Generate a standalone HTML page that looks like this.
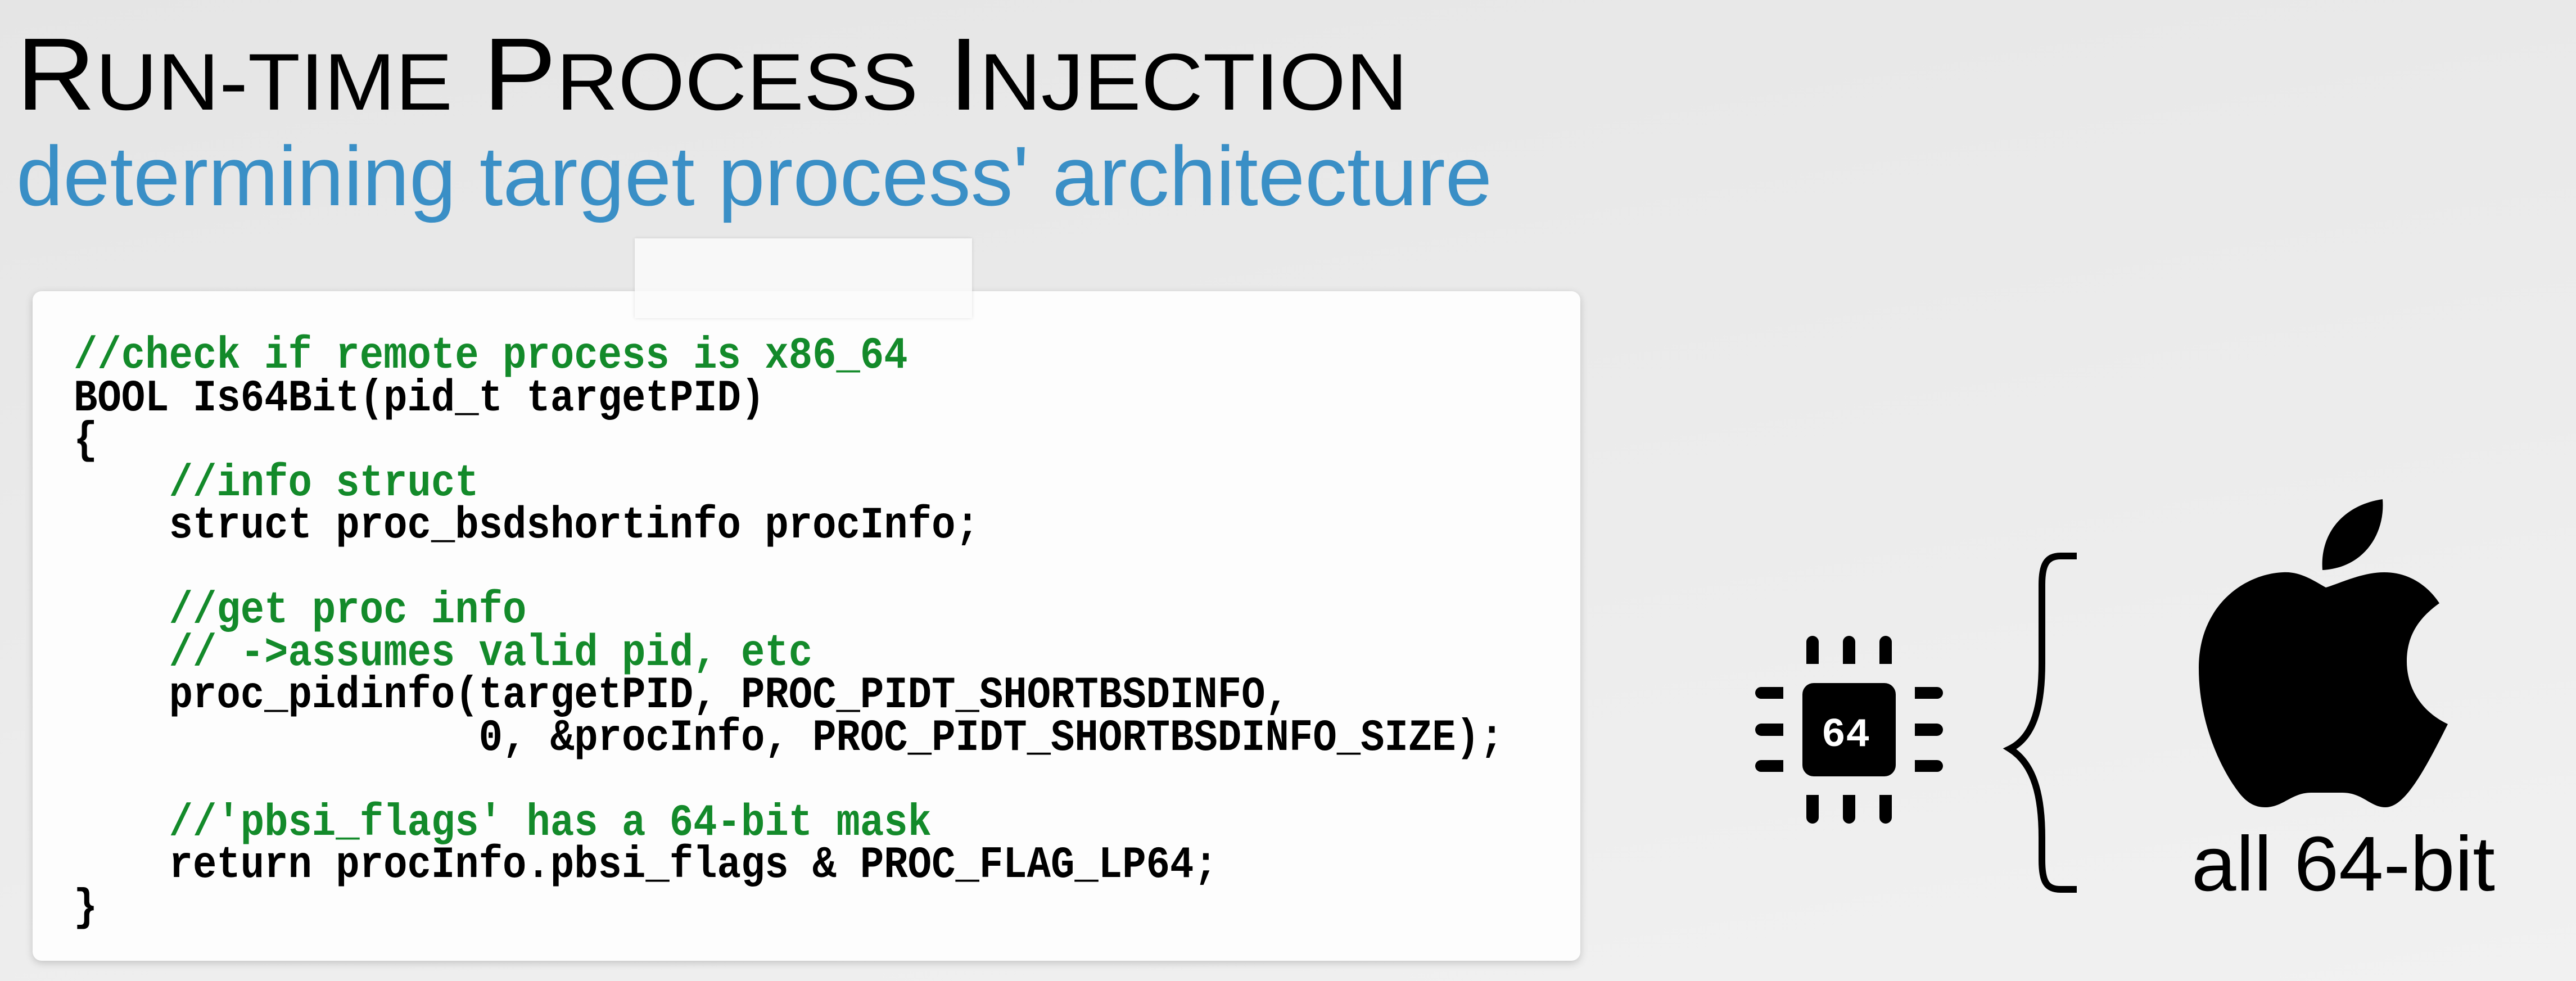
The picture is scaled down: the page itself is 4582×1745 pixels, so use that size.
<!DOCTYPE html>
<html><head><meta charset="utf-8"><style>
html,body{margin:0;padding:0}
body{width:4582px;height:1745px;position:relative;overflow:hidden;
background:linear-gradient(170deg,#e5e5e5 0%,#eaeaea 40%,#f1f1f1 100%);font-family:"Liberation Sans",sans-serif}
#title{position:absolute;left:29px;top:40px;font-size:183px;line-height:183px;color:#000;white-space:nowrap;transform-origin:0 0;font-family:"Liberation Sans Narrow","Liberation Sans",sans-serif}
#title .s{font-size:143px}
#sub{position:absolute;left:29px;top:228px;font-size:150px;line-height:170px;color:#3a8fc6;white-space:nowrap;transform-origin:0 0;font-family:"Liberation Sans Narrow","Liberation Sans",sans-serif}
#box{position:absolute;left:58px;top:518px;width:2753px;height:1191px;background:#fdfdfd;border-radius:16px;box-shadow:0 4px 14px rgba(0,0,0,.18)}
#tape{position:absolute;left:1129px;top:424px;width:600px;height:142px;background:rgba(250,250,250,.85);box-shadow:0 0 6px rgba(0,0,0,.12)}
#code{position:absolute;left:131px;top:596px;font-family:"Liberation Mono",monospace;font-weight:bold;font-size:80px;line-height:75.5px;white-space:pre;color:#000;transform:scaleX(0.883);transform-origin:0 0}
.g{color:#138a2a}
#all{position:absolute;left:3898px;top:1462px;font-size:138px;line-height:150px;color:#000;white-space:nowrap}
</style></head><body>
<div id="title">R<span class="s">UN-TIME</span> P<span class="s">ROCESS</span> I<span class="s">NJECTION</span></div>
<div id="sub">determining target process' architecture</div>
<div id="box"></div>
<div id="tape"></div>
<div id="code"><span class="g">//check if remote process is x86_64</span>
BOOL Is64Bit(pid_t targetPID)
{
    <span class="g">//info struct</span>
    struct proc_bsdshortinfo procInfo;

    <span class="g">//get proc info</span>
    <span class="g">// -&gt;assumes valid pid, etc</span>
    proc_pidinfo(targetPID, PROC_PIDT_SHORTBSDINFO,
                 0, &amp;procInfo, PROC_PIDT_SHORTBSDINFO_SIZE);

    <span class="g">//'pbsi_flags' has a 64-bit mask</span>
    return procInfo.pbsi_flags &amp; PROC_FLAG_LP64;
}</div>
<svg style="position:absolute;left:0;top:0" width="4582" height="1745">
<rect x="3206" y="1215" width="166" height="166" rx="20" fill="#000"/>
<g fill="#000">
<rect x="3213" y="1131" width="22" height="50" rx="11"/><rect x="3213" y="1150" width="22" height="31"/>
<rect x="3278" y="1131" width="22" height="50" rx="11"/><rect x="3278" y="1150" width="22" height="31"/>
<rect x="3343" y="1131" width="22" height="50" rx="11"/><rect x="3343" y="1150" width="22" height="31"/>
<rect x="3213" y="1414" width="22" height="51" rx="11"/><rect x="3213" y="1414" width="22" height="30"/>
<rect x="3278" y="1414" width="22" height="51" rx="11"/><rect x="3278" y="1414" width="22" height="30"/>
<rect x="3343" y="1414" width="22" height="51" rx="11"/><rect x="3343" y="1414" width="22" height="30"/>
<rect x="3122" y="1222" width="50" height="21" rx="10.5"/><rect x="3140" y="1222" width="32" height="21"/>
<rect x="3122" y="1287" width="50" height="22" rx="11"/><rect x="3140" y="1287" width="32" height="22"/>
<rect x="3122" y="1352" width="50" height="21" rx="10.5"/><rect x="3140" y="1352" width="32" height="21"/>
<rect x="3406" y="1222" width="50" height="21" rx="10.5"/><rect x="3406" y="1222" width="32" height="21"/>
<rect x="3406" y="1287" width="50" height="22" rx="11"/><rect x="3406" y="1287" width="32" height="22"/>
<rect x="3406" y="1352" width="50" height="21" rx="10.5"/><rect x="3406" y="1352" width="32" height="21"/>
</g>
<text x="3283" y="1327" text-anchor="middle" font-family="Liberation Mono,monospace" font-weight="bold" font-size="72" fill="#fff">64</text>
<path d="M3694,989 L3665,989 C3640,989 3632,1005 3632,1040 L3632,1180 C3632,1250 3620,1310 3575,1332 C3620,1360 3632,1420 3632,1490 L3632,1530 C3632,1568 3640,1582 3665,1582 L3694,1582" fill="none" stroke="#000" stroke-width="12"/>
<g transform="translate(3911,888)" fill="#000">
<path d="M226,157 C205,145 180,128 150,130 C80,133 0,190 0,300 C0,400 40,480 70,520 C85,540 100,548 118,548 C150,548 165,522 200,522 L255,522 C292,522 305,548 332,548 C365,548 398,490 443,400 C400,380 370,340 370,288 C370,235 400,205 428,185 C405,150 370,130 330,130 C290,130 250,150 226,157 Z"/>
<path d="M327,0 C332,60 295,122 220,126 C215,60 258,10 327,0 Z"/>
</g>
</svg>
<div id="all">all 64-bit</div>
<script>
function fit(id,w){var e=document.getElementById(id);var r=e.getBoundingClientRect().width;e.style.transform='scaleX('+(w/r)+')';}
fit('title',2475);fit('sub',2625);
(function(){var e=document.getElementById('all');var r=e.getBoundingClientRect().width;e.style.transformOrigin='0 0';e.style.transform='scaleX('+(540/r)+')';})();
</script>
</body></html>
